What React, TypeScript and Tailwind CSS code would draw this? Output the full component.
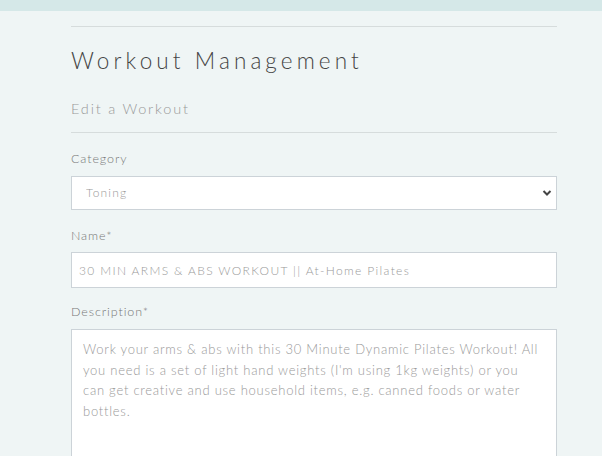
import React from "react";

export default function App() {
  const desc =
    "Work your arms & abs with this 30 Minute Dynamic Pilates Workout! All you need is a set of light hand weights (I'm using 1kg weights) or you can get creative and use household items, e.g. canned foods or water bottles.";
  return (
    <div className="min-h-[456px] w-full bg-[#eff5f5] font-['Lato',sans-serif] overflow-hidden">
      <div className="h-[11px] bg-[#d5e8e8]" />
      <div className="mx-[71px] w-[486px] pt-[15px]">
        <div className="h-px bg-[#d6dcdc]" />
        <h1 className="mt-[19px] text-[22.5px] leading-[30px] font-light tracking-[4.1px] text-[#444]">
          Workout Management
        </h1>
        <h2 className="mt-[23px] text-[14.5px] leading-[20px] font-light tracking-[1.8px] text-[#999]">
          Edit a Workout
        </h2>
        <div className="mt-[13px] h-px bg-[#d6dcdc]" />
        <form className="flex flex-col">
          <label className="mt-[17px] text-[12.5px] leading-[18px] tracking-[0.9px] text-[#777] font-light">
            Category
          </label>
          <div className="relative mt-[8px] h-[34px]">
            <select
              className="h-[34px] w-full appearance-none border border-[#ccd3d8] bg-white pl-[14px] text-[12px] tracking-[1.2px] text-[#999] font-light outline-none"
              defaultValue="Toning"
            >
              <option>Toning</option>
            </select>
            <svg
              className="pointer-events-none absolute right-[5px] top-[13px]"
              width="10"
              height="8"
              viewBox="0 0 10 8"
            >
              <path d="M1.5 2 L5 5.5 L8.5 2" fill="none" stroke="#444" strokeWidth="2" />
            </svg>
          </div>
          <label className="mt-[17px] text-[12.5px] leading-[18px] tracking-[0.9px] text-[#777] font-light">
            Name*
          </label>
          <input
            className="mt-[7px] h-[36px] w-full border border-[#ccd3d8] bg-white pl-[7px] text-[12px] tracking-[1.35px] text-[#999] font-light outline-none"
            defaultValue="30 MIN ARMS & ABS WORKOUT || At-Home Pilates"
          />
          <label className="mt-[15px] text-[12.5px] leading-[18px] tracking-[0.9px] text-[#777] font-light">
            Description*
          </label>
          <textarea
            className="mt-[8px] h-[160px] w-full resize-none border border-[#ccd3d8] bg-white pl-[11px] pr-[15px] pt-[9px] text-[13px] leading-[20.7px] tracking-[0.75px] text-[#999] font-light outline-none"
            defaultValue={desc}
          />
        </form>
      </div>
    </div>
  );
}
